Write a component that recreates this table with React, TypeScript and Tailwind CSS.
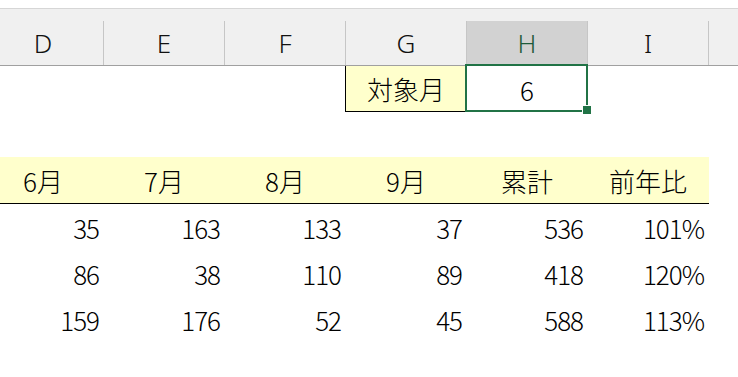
const JP = "font-['Noto_Sans_CJK_JP','Noto_Sans',sans-serif]";

const COLS = ["D", "E", "F", "G", "H", "I"];
const MONTHS = ["6月", "7月", "8月", "9月", "累計", "前年比"];
const ROWS = [
  ["35", "163", "133", "37", "536", "101%"],
  ["86", "38", "110", "89", "418", "120%"],
  ["159", "176", "52", "45", "588", "113%"],
];

function ColumnHeader() {
  return (
    <div className="flex h-[57px] shrink-0 bg-[#f0f0f0] border-b border-[#a0a0a0] pt-[12px]">
      {COLS.map((c, i) => (
        <div
          key={c}
          className={`flex h-full w-[121px] shrink-0 items-center justify-center border-l border-[#c6c6c6] font-['Noto_Sans',sans-serif] text-[26px] font-light ${
            i === 0 ? "-ml-[18px]" : ""
          } ${c === "H" ? "bg-[#d2d2d2] text-[#1e5b3b]" : "text-[#111]"}`}
        >
          {c}
        </div>
      ))}
      <div className="h-full flex-1 border-l border-[#c6c6c6]" />
    </div>
  );
}

export default function App() {
  return (
    <div className={`flex h-[377px] w-[738px] flex-col overflow-hidden bg-white font-light text-black ${JP}`}>
      <div className="h-[8px] shrink-0 bg-white" />
      <div className="h-px shrink-0 bg-[#d6d6d6]" />
      <ColumnHeader />

      {/* 対象月 row */}
      <div className="flex h-[46px] shrink-0">
        <div className="-ml-[18px] w-[121px] shrink-0" />
        <div className="w-[121px] shrink-0" />
        <div className="w-[121px] shrink-0" />
        <div className="flex w-[121px] shrink-0 items-center justify-center border-l border-b border-black bg-[#ffffcc] text-[26px]">
          対象月
        </div>
        <div className="relative flex w-[121px] shrink-0 items-center justify-center pl-px text-[26px]">
          6
          <div className="absolute -left-px -right-px -top-[2px] bottom-0 border-2 border-[#217346]" />
          <div className="absolute -right-[5px] -bottom-[3px] h-[10px] w-[10px] border border-white bg-[#217346]" />
        </div>
      </div>

      <div className="h-[45px] shrink-0" />

      {/* month header row */}
      <div className="-ml-[18px] flex h-[47px] w-[727px] shrink-0 border-b border-black bg-[#ffffcc]">
        {MONTHS.map((m) => (
          <div key={m} className="flex w-[121px] shrink-0 items-center justify-center pl-px text-[26px]">
            {m}
          </div>
        ))}
      </div>

      {ROWS.map((row, r) => (
        <div key={r} className="flex h-[46px] shrink-0">
          {row.map((v, i) => (
            <div
              key={i}
              className={`flex w-[121px] shrink-0 items-center justify-end pl-px pr-[4px] text-[26px] tracking-[-1px] ${
                i === 0 ? "-ml-[18px]" : ""
              }`}
            >
              {v}
            </div>
          ))}
        </div>
      ))}
    </div>
  );
}
